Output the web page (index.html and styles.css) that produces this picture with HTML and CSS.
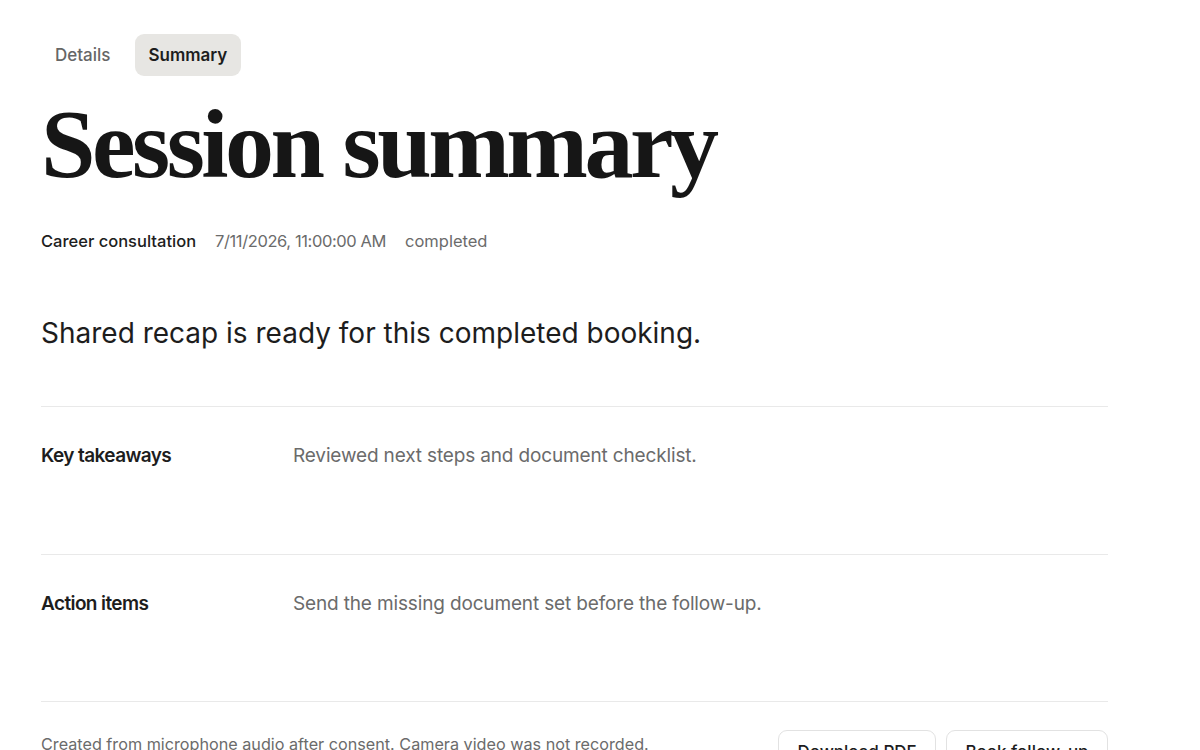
FILE: index.html
```html
<!DOCTYPE html>
<html>
<head>
<meta charset="utf-8">
<link rel="stylesheet" href="styles.css">
</head>
<body>
<main class="page">
  <nav class="tabs">
    <span class="tab">Details</span>
    <span class="tab active">Summary</span>
  </nav>
  <h1 class="title">Session summary</h1>
  <div class="meta">
    <span class="meta-type">Career consultation</span>
    <span class="meta-item meta-date">7/11/2026, 11:00:00 AM</span>
    <span class="meta-item">completed</span>
  </div>
  <p class="lead">Shared recap is ready for this completed booking.</p>
  <section class="rows">
    <div class="row">
      <div class="row-label">Key takeaways</div>
      <div class="row-value">Reviewed next steps and document checklist.</div>
    </div>
    <div class="row">
      <div class="row-label">Action items</div>
      <div class="row-value">Send the missing document set before the follow-up.</div>
    </div>
  </section>
  <footer class="foot">
    <p class="note">Created from microphone audio after consent. Camera video was not recorded.</p>
    <div class="actions">
      <button class="btn btn-pdf">Download PDF</button>
      <button class="btn btn-book">Book follow-up</button>
    </div>
  </footer>
</main>
</body>
</html>
```

FILE: styles.css
```css
html, body {
  margin: 0;
  padding: 0;
  background: #ffffff;
}
body {
  font-family: "Inter", "Roboto", sans-serif;
  color: #1d1d1d;
}
.page {
  width: 1067px;
  padding: 34px 0 0 41px;
}
.tabs {
  display: flex;
  gap: 10px;
}
.tab {
  display: inline-flex;
  align-items: center;
  height: 42px;
  padding: 0 14px;
  border-radius: 9px;
  font-size: 17px;
  font-weight: 500;
  color: #666;
}
.tab.active {
  background: #e7e6e3;
  color: #1d1d1d;
  font-weight: 600;
}
.title {
  margin: 14px 0 0 0;
  font-family: "Liberation Serif", "Times New Roman", serif;
  font-weight: 700;
  font-size: 98px;
  line-height: 108px;
  letter-spacing: -3.5px;
  color: #161616;
}
.meta {
  display: flex;
  gap: 19px;
  margin-top: 31px;
  font-size: 16.5px;
  line-height: 24px;
}
.meta-type {
  color: #1d1d1d;
  font-weight: 500;
}
.meta-item {
  color: #6b6b6b;
}
.meta-date {
  letter-spacing: -0.4px;
}
.lead {
  margin: 62px 0 0 0;
  font-size: 28px;
  line-height: 36px;
  color: #1d1d1d;
}
.rows {
  margin-top: 55px;
}
.row {
  display: grid;
  grid-template-columns: 252px 1fr;
  height: 147.5px;
  border-top: 1px solid #e9e9e9;
  padding-top: 37px;
  box-sizing: border-box;
}
.row-label {
  font-size: 19px;
  font-weight: 600;
  letter-spacing: -0.6px;
  color: #1d1d1d;
}
.row-value {
  font-size: 19px;
  letter-spacing: -0.15px;
  color: #6b6b6b;
}
.foot {
  display: flex;
  justify-content: space-between;
  align-items: flex-start;
  border-top: 1px solid #e9e9e9;
  padding-top: 28px;
}
.note {
  margin: 3px 0 0 0;
  font-size: 16.2px;
  line-height: 22px;
  color: #6b6b6b;
}
.actions {
  display: flex;
  gap: 10px;
}
.btn {
  height: 44px;
  padding: 0 18px;
  background: #fff;
  border: 1px solid #e2e2e2;
  border-radius: 9px;
  font-family: inherit;
  font-size: 17px;
  font-weight: 500;
  color: #1d1d1d;
}
.btn-pdf { width: 158px; }
.btn-book { width: 162px; }
```
